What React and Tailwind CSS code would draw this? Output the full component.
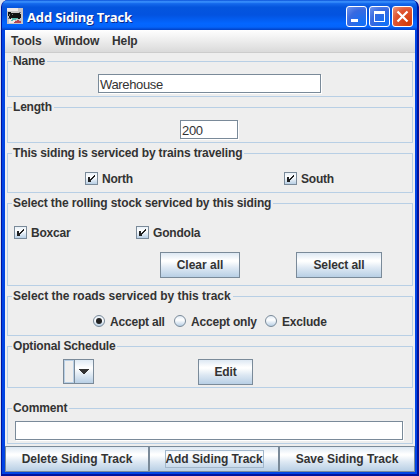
import React from 'react';

const BUTTON =
  'flex shrink-0 items-center justify-center border border-[#7a8a99] bg-[linear-gradient(180deg,#dde8f3_0%,#ffffff_30%,#fdfefe_36%,#dde8f3_62%,#b8cfe5_100%)]';

function Group({ title, className, tracking = '', children }) {
  return (
    <section className={`flex shrink-0 flex-col border border-[#b8cfe5] ${className}`}>
      <h2 className={`-mt-[8px] ml-1 h-[15px] w-fit shrink-0 bg-[#eeeeee] pl-px pr-[2px] font-bold leading-[15px] whitespace-nowrap ${tracking}`}>
        {title}
      </h2>
      {children}
    </section>
  );
}

function Field({ className, children }) {
  return (
    <div className={`h-[19px] shrink-0 border border-[#7a8a99] bg-white pl-px pt-px text-[13px] leading-[17px] font-normal tracking-[-0.35px] shadow-[1px_1px_0_#ffffff] ${className}`}>
      {children}
    </div>
  );
}

function Check({ label, className = '' }) {
  return (
    <div className={`flex h-[13px] items-center ${className}`}>
      <span className="h-[13px] w-[13px] shrink-0 border border-[#7a8a99] bg-[linear-gradient(180deg,#e8f0f7,#ffffff_35%,#b8cfe5)]">
        <svg width="11" height="11" viewBox="0 0 11 11" shapeRendering="crispEdges" fill="#222222">
          <path d="M2 4h2v5H2zM4 6h1v3H4zM5 5h1v2H5zM6 4h1v2H6zM7 3h1v2H7zM8 2h1v2H8z" />
        </svg>
      </span>
      <span className="ml-1 tracking-[-0.2px] whitespace-nowrap">{label}</span>
    </div>
  );
}

function Radio({ label, checked, className = '' }) {
  return (
    <div className={`flex h-3 items-center ${className}`}>
      <span className="flex h-3 w-3 shrink-0 items-center justify-center rounded-full border border-[#7a8a99] bg-[linear-gradient(180deg,#e2ecf5,#ffffff_40%,#b8cfe5)]">
        {checked && <span className="h-[6px] w-[6px] rounded-full bg-[#222222]" />}
      </span>
      <span className="ml-[5px] mt-[2px] tracking-[-0.2px] whitespace-nowrap">{label}</span>
    </div>
  );
}

function TrainIcon() {
  return (
    <svg className="ml-[6px] mt-[8px] shrink-0" width="16" height="16" viewBox="0 0 16 16" shapeRendering="crispEdges">
      <path fill="#c8c4c4" d="M0 0h16v16H0z" />
      <path fill="#eee8e8" d="M0 0h11v3H0zM2 11h6v4H2z" />
      <path fill="#111111" d="M1 4h3v1h9v1h1v4h-1v1H6v-1H4v1H2V8H1z" />
      <path fill="#777777" d="M2 6h1v2H2zM5 6h1v1H5zM1 10h2v1H1zM12 4h2v1h-2z" />
      <path fill="#57b9ad" d="M5 10h6v1H9v1H5zM4 12h2v1H4z" />
      <path fill="#b54552" d="M8 13h2v-1h2v1h2v2H7v-1h1z" />
    </svg>
  );
}

const CAPTION = 'h-[21px] w-[21px] shrink-0 rounded-[3px] border border-white';

export default function App() {
  return (
    <div className="flex h-[476px] w-[419px] flex-col overflow-hidden bg-[#d9e1ee] pl-px font-['Liberation_Sans',Arial,sans-serif] text-[12px] font-bold text-[#333333]">
      <div className="flex h-full w-[418px] flex-col overflow-hidden rounded-t-[7px] border-r-2 border-b-2 border-l border-[#00139c] bg-[#0144e4]">
        <header className="flex h-[30px] shrink-0 bg-[linear-gradient(180deg,#0a50d8_0%,#3d95ff_6%,#1569ec_12%,#0455dd_24%,#0353e0_50%,#0366ff_78%,#0464fb_90%,#0140c4_100%)]">
          <div className="-ml-px">
            <TrainIcon />
          </div>
          <h1 className="ml-1 mt-[8px] w-[319px] font-['Open_Sans',sans-serif] text-[13px] leading-[18px] font-bold tracking-[-0.16px] text-white [text-shadow:1px_1px_0_#0a2a8c] whitespace-nowrap">
            Add Siding Track
          </h1>
          <div className="mt-[6px] flex gap-[2px]">
            <svg className={`${CAPTION} bg-[radial-gradient(circle_at_80%_85%,#1070f8,#3869e0_60%,#7296ee)]`} viewBox="0 0 19 19" shapeRendering="crispEdges">
              <path d="M4 12h7v3H4z" fill="white" />
            </svg>
            <svg className={`${CAPTION} bg-[radial-gradient(circle_at_80%_85%,#1070f8,#3869e0_60%,#7296ee)]`} viewBox="0 0 19 19" shapeRendering="crispEdges">
              <path d="M4 4h11v11H4zM5 7v7h9V7z" fill="white" fillRule="evenodd" />
            </svg>
            <svg className={`${CAPTION} bg-[radial-gradient(circle_at_80%_85%,#d33c08,#df5330_60%,#ee9a80)]`} viewBox="0 0 19 19">
              <path d="M4.5 4.5l10 10M14.5 4.5l-10 10" stroke="white" strokeWidth="2.2" />
            </svg>
          </div>
        </header>

        <div className="mr-[2px] mb-[2px] ml-[3px] flex h-[442px] shrink-0 flex-col bg-[#eeeeee]">
          <nav className="flex h-[23px] shrink-0 border-b border-[#cccccc] bg-[linear-gradient(180deg,#ffffff,#dadada)] leading-[22px] tracking-[-0.1px]">
            <span className="ml-[6px] w-[43px]">Tools</span>
            <span className="w-[58px]">Window</span>
            <span>Help</span>
          </nav>

          <main className="flex shrink-0 flex-col gap-[10px] pl-[2px] pr-[2px] pt-[8px]">
            <Group title="Name" className="h-[36px]" tracking="tracking-[-0.2px]">
              <Field className="ml-[90px] mt-[5px] w-[223px]">Warehouse</Field>
            </Group>
            <Group title="Length" className="h-[36px]" tracking="tracking-[-0.2px]">
              <Field className="ml-[172px] mt-[5px] w-[58px]">200</Field>
            </Group>
            <Group title="This siding is serviced by trains traveling" className="h-[40px]" tracking="tracking-[-0.14px]">
              <div className="mt-[11px] flex">
                <Check label="North" className="ml-[77px] w-[199px]" />
                <Check label="South" />
              </div>
            </Group>
            <Group title="Select the rolling stock serviced by this siding" className="h-[83px]" tracking="tracking-[-0.12px]">
              <div className="mt-[15px] flex">
                <Check label="Boxcar" className="ml-[6px] w-[122px]" />
                <Check label="Gondola" />
              </div>
              <div className="mt-[13px] flex">
                <button className={`${BUTTON} ml-[152px] h-[26px] w-[80px]`}>Clear all</button>
                <button className={`${BUTTON} ml-[56px] h-[26px] w-[86px] tracking-[-0.1px]`}>Select all</button>
              </div>
            </Group>
            <Group title="Select the roads serviced by this track" className="h-[40px]" tracking="tracking-[-0.03px]">
              <div className="mt-[11px] flex">
                <Radio label="Accept all" checked className="ml-[85px] w-[81px]" />
                <Radio label="Accept only" className="w-[91px]" />
                <Radio label="Exclude" />
              </div>
            </Group>
            <Group title="Optional Schedule" className="h-[42px]" tracking="tracking-[-0.17px]">
              <div className="mt-[5px] flex">
                <div className="ml-[55px] flex h-[25px] w-[31px] border border-[#7a8a99]">
                  <span className="w-[10px] border border-[#b8cfe5]" />
                  <span className="flex flex-1 items-center justify-center border-l border-[#7a8a99] bg-[linear-gradient(180deg,#dfeaf4,#ffffff_35%,#b8cfe5)]">
                    <svg width="10" height="5" viewBox="0 0 10 5" fill="#333333" shapeRendering="crispEdges">
                      <path d="M0 0h10v1H0zM1 1h8v1H1zM2 2h6v1H2zM3 3h4v1H3zM4 4h2v1H4z" />
                    </svg>
                  </span>
                </div>
                <button className={`${BUTTON} ml-[104px] h-[26px] w-[55px] tracking-[-0.2px]`}>Edit</button>
              </div>
            </Group>
            <Group title="Comment" className="mt-[10px] h-[36px]" tracking="tracking-[-0.15px]">
              <Field className="ml-[7px] mt-[5px] w-[388px]" />
            </Group>
          </main>

          <footer className="mt-[2px] flex shrink-0">
            <button className={`${BUTTON} h-[26px] w-[144px]`}>Delete Siding Track</button>
            <button className={`${BUTTON} h-[26px] w-[130px] tracking-[-0.06px]`}>
              <span className="flex h-[18px] w-[99px] items-center justify-center border border-[#a3b8cc] whitespace-nowrap">Add Siding Track</span>
            </button>
            <button className={`${BUTTON} h-[26px] w-[136px]`}>Save Siding Track</button>
          </footer>
        </div>
      </div>
    </div>
  );
}
